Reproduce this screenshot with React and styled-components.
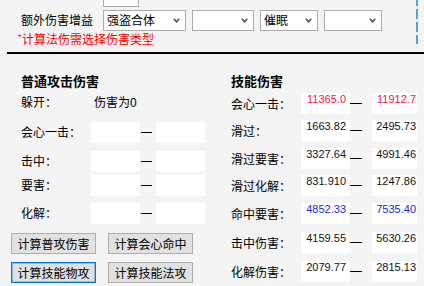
import React from "react";
import styled, { createGlobalStyle } from "styled-components";

const GlobalStyle = createGlobalStyle`
  html, body { margin: 0; padding: 0; background: #f4f4f4; }
  body {
    font-family: "Liberation Sans", "Noto Sans CJK SC", sans-serif;
    font-size: 12px;
    color: #000;
  }
`;

const Window = styled.div`
  width: 424px;
  height: 286px;
  overflow: hidden;
  background: #f4f4f4;
  display: flex;
  flex-direction: column;
`;

const TopArea = styled.div`
  display: flex;
  align-items: flex-start;
`;

const TopContent = styled.div`
  width: 416px;
  display: flex;
  flex-direction: column;
`;

const FocusEdge = styled.div`
  width: 2px;
  height: 44px;
  background: repeating-linear-gradient(
    to bottom,
    #5f9fd8 -4px,
    #5f9fd8 6px,
    transparent 6px,
    transparent 9px
  );
`;

const StubRow = styled.div`
  padding-left: 103px;
  height: 7px;
`;

const Stub = styled.div`
  width: 36px;
  height: 7px;
  box-sizing: border-box;
  border: 1px solid #acacac;
  border-top: 0;
  background: #fff;
`;

const FilterRow = styled.div`
  display: flex;
  align-items: center;
  gap: 6px;
  margin-top: 3px;
  padding-left: 21px;
  height: 21px;
`;

const FilterLabel = styled.div`
  width: 76px;
  line-height: 16px;
  white-space: nowrap;
`;

const Select = styled.div`
  width: ${(p) => p.$w}px;
  height: 21px;
  box-sizing: border-box;
  border: 1px solid #acacac;
  background: #fff;
  display: flex;
  align-items: center;
  justify-content: space-between;
  padding: 0 5px 0 3px;
  line-height: 16px;
  white-space: nowrap;
`;

const Warning = styled.div`
  margin-top: 1px;
  padding-left: 18px;
  line-height: 16px;
  color: #ff0000;
  white-space: nowrap;
  display: flex;
  align-items: flex-start;
`;

const Star = styled.span`
  font-size: 9px;
  line-height: 10px;
  width: 4px;
  overflow: hidden;
`;

const Rule = styled.div`
  height: 2px;
  margin-top: 4px;
  margin-left: 7px;
  background: #000;
`;

const Lower = styled.div`
  display: grid;
  grid-template-columns: 210px 214px;
`;

const Column = styled.div`
  display: flex;
  flex-direction: column;
  padding-left: ${(p) => p.$pad}px;
`;

const Fields = styled.div`
  display: flex;
  flex-direction: column;
  padding-left: ${(p) => p.$indent}px;
`;

const Heading = styled.div`
  margin-top: 19px;
  font-family: "Noto Sans CJK SC", sans-serif;
  font-weight: bold;
  font-size: 13px;
  line-height: 16px;
  white-space: nowrap;
`;

const FieldRow = styled.div`
  display: flex;
  align-items: center;
  height: 21px;
  margin-top: ${(p) => p.$gap}px;
`;

const FieldLabel = styled.div`
  width: 70px;
  flex: none;
  line-height: 16px;
  padding-top: ${(p) => (p.$drop ? 2 : 0)}px;
  white-space: nowrap;
`;

const PlainText = styled.div`
  margin-left: 3px;
  line-height: 16px;
  white-space: nowrap;
`;

const InputBox = styled.div`
  width: 49px;
  height: 21px;
  background: #fff;
  flex: none;
`;

const MidDash = styled.div`
  width: 11px;
  height: 1px;
  background: #000;
  margin: 0 4px 0 1px;
  flex: none;
`;

const ValueBox = styled.div`
  width: ${(p) => p.$w}px;
  height: 21px;
  box-sizing: border-box;
  flex: none;
  background: #fff;
  padding-right: ${(p) => p.$pr}px;
  font-family: "Liberation Sans", sans-serif;
  font-size: 11px;
  line-height: 12px;
  text-align: right;
  color: ${(p) => p.$color};
  white-space: nowrap;
  align-self: flex-start;
`;

const BaseDash = styled.div`
  width: 12px;
  height: 1px;
  background: #000;
  align-self: flex-start;
  margin-top: 10px;
  margin-right: 10px;
  flex: none;
`;

const ButtonGrid = styled.div`
  display: grid;
  grid-template-columns: 85px 85px;
  column-gap: 12px;
  row-gap: 8px;
  margin-top: 9px;
`;

const Button = styled.button`
  height: 21px;
  box-sizing: border-box;
  margin: 0;
  padding: 0;
  border: 1px solid ${(p) => (p.$focused ? "#0078d7" : "#adadad")};
  box-shadow: ${(p) => (p.$focused ? "inset 0 0 0 1px rgba(0,120,215,0.35)" : "none")};
  background: #e1e1e1;
  font-family: "Noto Sans CJK SC", sans-serif;
  font-size: 12px;
  line-height: 16px;
  color: #000;
  white-space: nowrap;
`;

const Chevron = () => (
  <svg width="7" height="5" viewBox="0 0 7 5">
    <polyline
      points="0.8,0.8 3.5,3.9 6.2,0.8"
      fill="none"
      stroke="#5c5c5c"
      strokeWidth="1.7"
    />
  </svg>
);

const selects = [
  { w: 83, text: "强盗合体" },
  { w: 62, text: "" },
  { w: 58, text: "催眠" },
  { w: 58, text: "" },
];

const leftRows = [
  { label: "会心一击：", gap: 9 },
  { label: "击中：", gap: 8 },
  { label: "要害：", gap: 3 },
  { label: "化解：", gap: 7 },
];

const RED = "#f5143c";
const BLUE = "#2424e6";
const DARK = "#111";

const rightRows = [
  { label: "会心一击：", a: "11365.0", b: "11912.7", color: RED, gap: 4 },
  { label: "滑过：", a: "1663.82", b: "2495.73", color: DARK, gap: 6 },
  { label: "滑过要害：", a: "3327.64", b: "4991.46", color: DARK, gap: 7 },
  { label: "滑过化解：", a: "831.910", b: "1247.86", color: DARK, gap: 6 },
  { label: "命中要害：", a: "4852.33", b: "7535.40", color: BLUE, gap: 7 },
  { label: "击中伤害：", a: "4159.55", b: "5630.26", color: DARK, gap: 8 },
  { label: "化解伤害：", a: "2079.77", b: "2815.13", color: DARK, gap: 8 },
];

const buttons = [
  { text: "计算普攻伤害" },
  { text: "计算会心命中" },
  { text: "计算技能物攻", focused: true },
  { text: "计算技能法攻" },
];

export default function App() {
  return (
    <>
      <GlobalStyle />
      <Window>
        <TopArea>
          <TopContent>
            <StubRow>
              <Stub />
            </StubRow>
            <FilterRow>
              <FilterLabel>额外伤害增益</FilterLabel>
              {selects.map((s, i) => (
                <Select key={i} $w={s.w}>
                  <span>{s.text}</span>
                  <Chevron />
                </Select>
              ))}
            </FilterRow>
            <Warning>
              <Star>*</Star>
              <span>计算法伤需选择伤害类型</span>
            </Warning>
          </TopContent>
          <FocusEdge />
        </TopArea>
        <Rule />
        <Lower>
          <Column $pad={11}>
            <Fields $indent={10}>
              <Heading>普通攻击伤害</Heading>
              <FieldRow $gap={3}>
                <FieldLabel>躲开：</FieldLabel>
                <PlainText>伤害为0</PlainText>
              </FieldRow>
              {leftRows.map((r) => (
                <FieldRow key={r.label} $gap={r.gap}>
                  <FieldLabel>{r.label}</FieldLabel>
                  <InputBox />
                  <MidDash />
                  <InputBox />
                </FieldRow>
              ))}
            </Fields>
            <ButtonGrid>
              {buttons.map((b) => (
                <Button key={b.text} $focused={b.focused}>
                  {b.text}
                </Button>
              ))}
            </ButtonGrid>
          </Column>
          <Column $pad={21}>
            <Fields $indent={0}>
              <Heading>技能伤害</Heading>
              {rightRows.map((r) => (
                <FieldRow key={r.label} $gap={r.gap}>
                  <FieldLabel $drop>{r.label}</FieldLabel>
                  <ValueBox $w={49} $pr={4} $color={r.color}>
                    {r.a}
                  </ValueBox>
                  <BaseDash />
                  <ValueBox $w={45} $pr={1} $color={r.color}>
                    {r.b}
                  </ValueBox>
                </FieldRow>
              ))}
            </Fields>
          </Column>
        </Lower>
      </Window>
    </>
  );
}
